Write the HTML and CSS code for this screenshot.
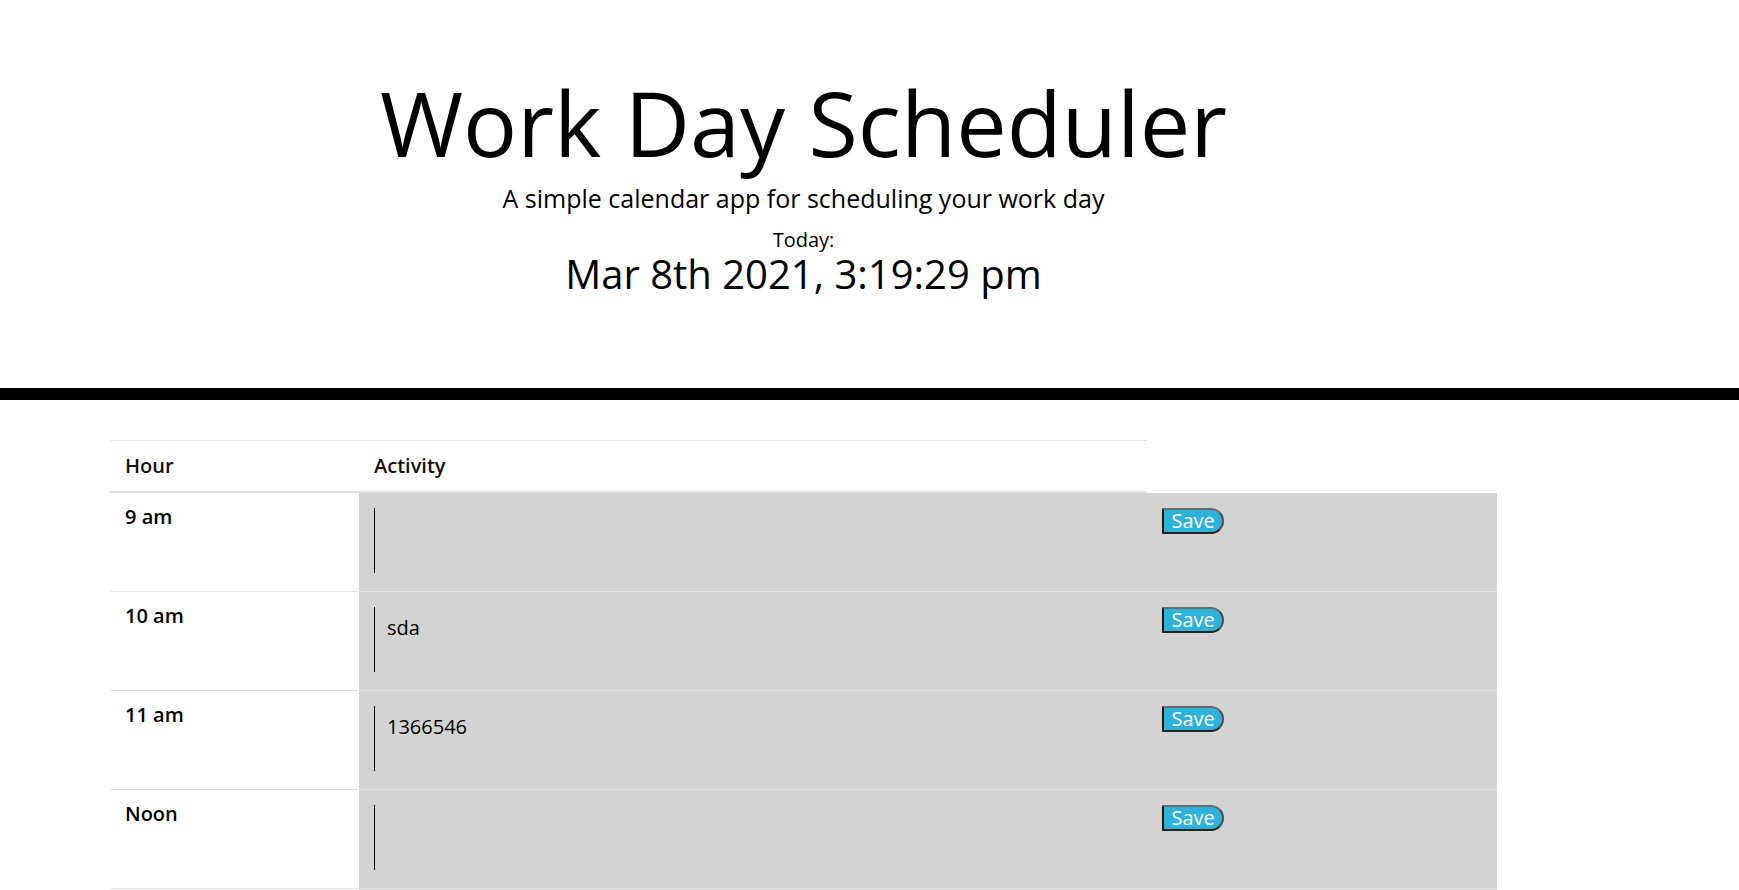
FILE: index.html
```html
<!DOCTYPE html>
<html lang="en">
<head>
<meta charset="utf-8">
<title>Work Day Scheduler</title>
<link rel="stylesheet" href="styles.css">
</head>
<body>
<header class="jumbotron">
  <div class="jumbo-inner">
    <h1 class="title">Work Day Scheduler</h1>
    <p class="lead">A simple calendar app for scheduling your work day</p>
    <p class="today-label">Today:</p>
    <p class="current-day">Mar 8th 2021, 3:19:29 pm</p>
  </div>
</header>
<main class="schedule">
  <div class="thead">
    <div class="th">Hour</div>
    <div class="th">Activity</div>
  </div>
  <div class="trow first">
    <div class="hour">9 am</div>
    <div class="cell"><textarea class="activity"></textarea></div>
    <div class="cell"><button class="save-btn">Save</button></div>
  </div>
  <div class="trow">
    <div class="hour">10 am</div>
    <div class="cell"><textarea class="activity">sda</textarea></div>
    <div class="cell"><button class="save-btn">Save</button></div>
  </div>
  <div class="trow">
    <div class="hour">11 am</div>
    <div class="cell"><textarea class="activity">1366546</textarea></div>
    <div class="cell"><button class="save-btn">Save</button></div>
  </div>
  <div class="trow">
    <div class="hour">Noon</div>
    <div class="cell"><textarea class="activity"></textarea></div>
    <div class="cell"><button class="save-btn">Save</button></div>
  </div>
  <div class="trow">
    <div class="hour">1 pm</div>
    <div class="cell"><textarea class="activity"></textarea></div>
    <div class="cell"><button class="save-btn">Save</button></div>
  </div>
  <div class="trow">
    <div class="hour">2 pm</div>
    <div class="cell"><textarea class="activity"></textarea></div>
    <div class="cell"><button class="save-btn">Save</button></div>
  </div>
</main>
</body>
</html>
```
FILE: styles.css
```css
html {
  overflow: hidden;
}

body {
  margin: 0;
  font-family: "Open Sans", "Noto Sans", sans-serif;
  font-size: 20px;
  line-height: 1;
  color: #212529;
  background: #ffffff;
}

.jumbotron {
  padding: 68px 0 94px;
  border-bottom: 12px solid #000000;
  margin-bottom: 40px;
  color: #000000;
}

.jumbo-inner {
  width: 1387px;
  margin-left: 110px;
  text-align: center;
}

.title {
  font-size: 90px;
  font-weight: 400;
  line-height: 108px;
  margin: 0 0 10px;
}

.lead {
  font-size: 25px;
  font-weight: 400;
  line-height: 25px;
  margin: 0 0 19px;
}

.today-label {
  font-size: 20px;
  line-height: 20px;
  margin: 0 0 4px;
}

.current-day {
  font-size: 40px;
  line-height: 40px;
  margin: 0;
}

.schedule {
  margin-left: 110px;
  width: 1387px;
}

.thead {
  display: grid;
  grid-template-columns: 249px 788px;
  width: 1037px;
  border-top: 1px solid #dee2e6;
  border-bottom: 2px solid #dee2e6;
}

.th {
  padding: 15px;
  font-weight: 600;
  line-height: 20px;
  color: #111111;
}

.trow {
  display: grid;
  grid-template-columns: 249px 788px 350px;
  border-top: 1px solid #dee2e6;
}

.trow.first {
  border-top: none;
}

.hour,
.cell {
  box-sizing: border-box;
  height: 98px;
  padding: 15px;
  line-height: 20px;
}

.hour {
  padding-top: 14px;
  font-weight: 600;
  color: #000000;
}

.cell {
  background: #d3d3d3;
}

.activity {
  display: block;
  box-sizing: border-box;
  width: 100%;
  height: 65px;
  margin: 0;
  padding: 11px 12px 12px;
  border: none;
  border-left: 1px solid #000000;
  background: transparent;
  color: #000000;
  font-family: "Open Sans", "Noto Sans", sans-serif;
  font-size: 20px;
  line-height: 20px;
  resize: none;
  outline: none;
}

.save-btn {
  display: block;
  box-sizing: border-box;
  height: 26px;
  padding: 0 7.5px;
  font-family: "Open Sans", "Noto Sans", sans-serif;
  font-size: 20px;
  line-height: 20px;
  color: #ffffff;
  background: #2db2da;
  border-width: 2px;
  border-style: solid;
  border-color: #6b6b6b #4d4d4d #222222 #111111;
  border-radius: 0 13px 13px 0;
}
```
